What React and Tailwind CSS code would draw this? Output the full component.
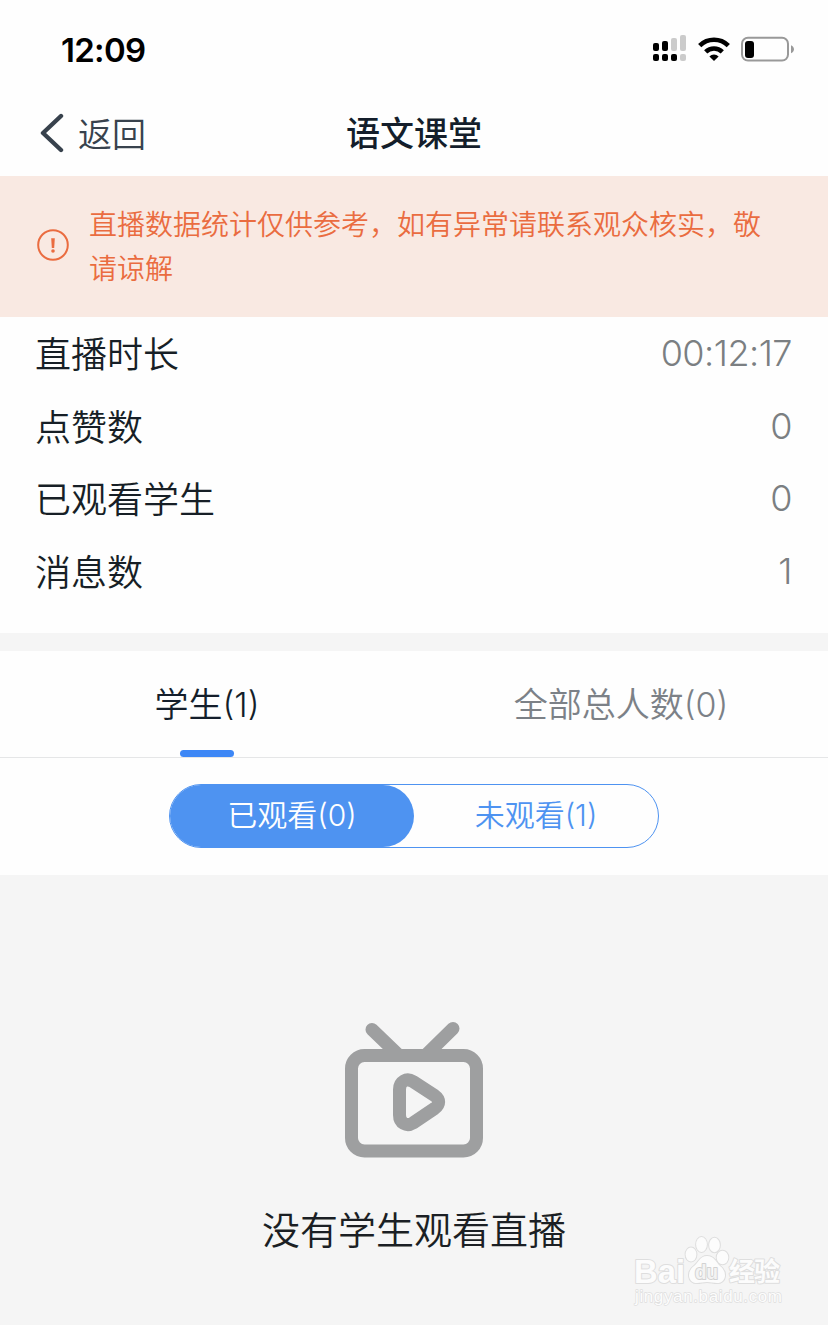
import React, { useState } from "react";

const stats = [
  { label: "直播时长", value: "00:12:17" },
  { label: "点赞数", value: "0" },
  { label: "已观看学生", value: "0" },
  { label: "消息数", value: "1" },
];

const StatusBar = () => {
  return (
    <div className="h-[88px] pl-[61px] pr-[33px] pt-[29px] flex items-start justify-between">
      <span className="font-['Inter'] text-[33px] leading-[42px] font-semibold tracking-[-0.7px] text-black">
        12:09
      </span>
      <div className="flex items-center gap-[11px] pt-[5px]">
        <svg width="34" height="28" viewBox="0 0 34 28">
          <g fill="#000">
            <rect x="0" y="9" width="6" height="8" rx="2" />
            <rect x="9" y="7" width="6" height="10" rx="2" />
            <rect x="0" y="20" width="6" height="7" rx="2" />
            <rect x="9" y="20" width="6" height="7" rx="2" />
            <rect x="18" y="20" width="6" height="7" rx="2" />
          </g>
          <g fill="#cbcbcb">
            <rect x="18" y="4" width="6" height="13" rx="2" />
            <rect x="27" y="1" width="6" height="16" rx="2" />
            <rect x="27" y="20" width="6" height="7" rx="2" />
          </g>
        </svg>
        <svg width="32" height="28" viewBox="0 0 32 28">
          <path
            d="M1.7 11.6a20.5 20.5 0 0 1 28.6 0M7.7 17.8a12 12 0 0 1 16.6 0"
            fill="none"
            stroke="#000"
            strokeWidth="4.6"
          />
          <path d="M16 27l-4.6-4.6a6.6 6.6 0 0 1 9.2 0z" fill="#000" />
        </svg>
        <svg width="54" height="28" viewBox="0 0 54 28">
          <rect
            x="1"
            y="3.8"
            width="46"
            height="22.8"
            rx="6"
            fill="none"
            stroke="#999"
            strokeWidth="2"
          />
          <rect x="4" y="7" width="9" height="17" rx="3" fill="#000" />
          <path d="M50 11.2c4 2 4 6 0 8z" fill="#999" />
        </svg>
      </div>
    </div>
  );
};

const Header = () => {
  return (
    <div className="h-[88px] px-[40px] grid grid-cols-3 items-center">
      <button type="button" className="pt-[1px] flex items-center text-[#38424d]">
        <svg width="24" height="40" viewBox="0 0 24 40">
          <path
            d="M21 3L3 20l18 17"
            fill="none"
            stroke="currentColor"
            strokeWidth="4.4"
            strokeLinecap="round"
            strokeLinejoin="round"
          />
        </svg>
        <span className="ml-[14px] pt-[4px] text-[34px] leading-[48px] font-[350]">返回</span>
      </button>
      <h1 className="pt-[4px] text-center text-[34px] leading-[48px] font-medium text-[#141e2b]">
        语文课堂
      </h1>
    </div>
  );
};

const Notice = () => {
  return (
    <div className="h-[141px] pl-[37px] pr-[60px] flex items-center gap-[20px] bg-[#f9e9e2] text-[#ea6c40]">
      <svg className="mt-[-4px] shrink-0" width="32" height="32" viewBox="0 0 32 32">
        <circle cx="16" cy="16" r="14.8" fill="none" stroke="currentColor" strokeWidth="2" />
        <path d="M14.2 9.2h3.6l-.6 9.8h-2.400z" fill="currentColor" />
        <circle cx="16" cy="22" r="1.8" fill="currentColor" />
      </svg>
      <p className="pt-[1px] text-[28px] leading-[44px] font-[350]">
        直播数据统计仅供参考，如有异常请联系观众核实，敬请谅解
      </p>
    </div>
  );
};

const Watermark = () => {
  return (
    <div className="absolute left-[633px] top-[1234px] w-[152px] h-[76px]">
      <svg width="152" height="76" viewBox="0 0 152 76">
        <g
          fill="#fcfcfc"
          stroke="#dedede"
          strokeWidth="2"
          strokeLinejoin="round"
          paintOrder="stroke"
          fontFamily="Liberation Sans, Noto Sans CJK SC, sans-serif"
        >
          <text x="1" y="49" fontSize="33" fontWeight="700" textLength="51" lengthAdjust="spacingAndGlyphs">
            Bai
          </text>
          <ellipse cx="58" cy="20.5" rx="5.4" ry="7" />
          <ellipse cx="68.5" cy="10.5" rx="5.4" ry="7.4" />
          <ellipse cx="81.5" cy="11" rx="5.4" ry="7.2" />
          <ellipse cx="89.5" cy="23.5" rx="5.8" ry="6.8" />
          <path d="M74 22c7 0 9 6 13 10 8 6 6 17-3 17-4 0-6-1-10-1s-6 1-10 1c-9 0-11-11-3-17 5-4 6-10 13-10z" />
          <text
            x="62"
            y="45"
            fontSize="20"
            fontWeight="700"
            textLength="23"
            lengthAdjust="spacingAndGlyphs"
            fill="#f3f3f3"
            stroke="#d2d2d2"
          >
            du
          </text>
          <text x="96" y="47" fontSize="26" fontWeight="700" textLength="51">
            经验
          </text>
          <text x="2" y="68" fontSize="17" strokeWidth="1.4" textLength="147">
            jingyan.baidu.com
          </text>
        </g>
      </svg>
    </div>
  );
};

const App = () => {
  const [tab, setTab] = useState("student");
  const [watched, setWatched] = useState(true);

  return (
    <div className="relative w-[828px] h-[1325px] overflow-hidden flex flex-col bg-[#f5f5f5] font-['Inter','Noto_Sans_CJK_SC',sans-serif]">
      <div className="bg-[#fefefe]">
        <StatusBar />
        <Header />
      </div>
      <Notice />

      <div className="h-[316px] pl-[35px] pr-[36px] bg-[#fefefe]">
        {stats.map((item) => (
          <div key={item.label} className="h-[72.5px] flex items-center justify-between text-[36px] leading-[50px]">
            <span className="pt-[4px] text-[#171f26] font-[350]">{item.label}</span>
            <span className="font-[350] tracking-[-0.5px] text-[#7b7f82]">{item.value}</span>
          </div>
        ))}
      </div>

      <div className="mt-[18px] h-[107px] grid grid-cols-2 bg-[#fefefe] border-b border-[#e5e6e7] text-[34px] leading-[48px]">
        <button
          type="button"
          onClick={() => setTab("student")}
          className="flex flex-col items-center justify-between pt-[30px]"
        >
          <span className="font-[350] text-[#141e2b]">学生(1)</span>
          {tab === "student" && (
            <span className="w-[54px] h-[7px] rounded-full bg-[#3d87f6]" />
          )}
        </button>
        <button
          type="button"
          onClick={() => setTab("all")}
          className="flex flex-col items-center justify-between pt-[30px]"
        >
          <span className="font-[350] text-[#7c8187]">全部总人数(0)</span>
          {tab === "all" && (
            <span className="w-[54px] h-[7px] rounded-full bg-[#3d87f6]" />
          )}
        </button>
      </div>

      <div className="h-[117px] pt-[26px] flex justify-center items-start bg-[#fefefe]">
        <div className="w-[490px] h-[64px] rounded-full border border-[#4e93f1] flex overflow-hidden text-[30px] leading-[60px] font-[350]">
          <button
            type="button"
            onClick={() => setWatched(true)}
            className={
              watched
                ? "flex-1 rounded-r-full pb-[2px] bg-[#4e93f1] text-white"
                : "flex-1 pb-[2px] text-[#4e93f1]"
            }
          >
            已观看(0)
          </button>
          <button
            type="button"
            onClick={() => setWatched(false)}
            className={
              watched
                ? "flex-1 pb-[2px] text-[#4e93f1]"
                : "flex-1 rounded-l-full pb-[2px] bg-[#4e93f1] text-white"
            }
          >
            未观看(1)
          </button>
        </div>
      </div>

      <div className="flex-1 pt-[145px] flex flex-col items-center">
        <svg width="140" height="140" viewBox="0 0 140 140" fill="none" stroke="#9e9fa0" strokeWidth="13">
          <path d="M28 9.5l26 25M109 8.5L82 35" strokeLinecap="round" />
          <rect x="7.5" y="35.5" width="125" height="95.5" rx="13" />
          <path
            d="M55.5 69.500v25.500c0 8 7 12 13.500 8l21.500-14.500c5.500-4 5.500-9 0-13L69 61.500c-6.500-4-13.500 0-13.500 8z"
            strokeLinejoin="round"
          />
        </svg>
        <p className="mt-[43px] text-[38px] leading-[54px] font-[350] text-[#1b1f24]">
          没有学生观看直播
        </p>
      </div>

      <Watermark />
    </div>
  );
};

export default App;
